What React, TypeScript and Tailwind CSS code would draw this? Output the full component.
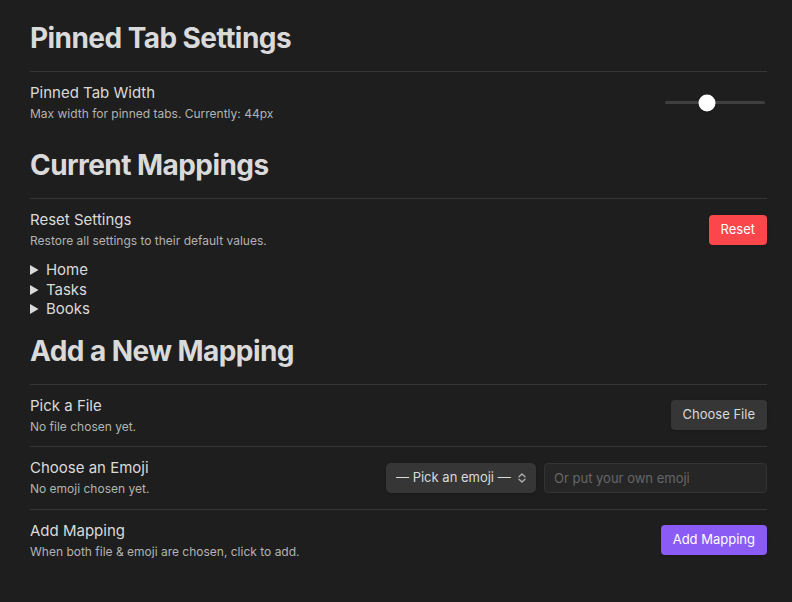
import { useState } from "react";

const Heading = ({ children, className = "" }: { children: React.ReactNode; className?: string }) => (
  <h2 className={`text-[28px] leading-[34px] font-bold tracking-[-0.02em] text-[#dadada] pb-4 ${className}`}>
    {children}
  </h2>
);

const Row = ({
  name,
  desc,
  children,
  className = "",
}: {
  name: string;
  desc: string;
  children?: React.ReactNode;
  className?: string;
}) => (
  <div className={`flex items-center justify-between gap-4 border-t border-[#363636] pt-[11px] ${className || "pb-[11.5px]"}`}>
    <div className="flex flex-col">
      <div className="text-[15px] leading-[20px] text-[#dadada]">{name}</div>
      <div className="pt-[3px] text-[12px] leading-[16px] text-[#b3b3b3]">{desc}</div>
    </div>
    <div className="flex items-center gap-2">{children}</div>
  </div>
);

const Slider = ({ value }: { value: number }) => (
  <div className="relative w-[100px] h-[18px] flex items-center mr-[2px]">
    <div className="w-full h-[3px] rounded-full bg-[#3f3f3f]" />
    <div
      className="absolute top-1/2 -translate-y-1/2 -translate-x-1/2 w-[17px] h-[17px] rounded-full bg-white shadow"
      style={{ left: `${value}%` }}
    />
  </div>
);

const ChevronsUpDown = () => (
  <svg width="8" height="10" viewBox="0 0 8 10" fill="none" stroke="#b3b3b3" strokeWidth="1.3" strokeLinecap="round" strokeLinejoin="round">
    <path d="M1 3.8 L4 1 L7 3.8" />
    <path d="M1 6.2 L4 9 L7 6.2" />
  </svg>
);

export default function App() {
  const [emoji, setEmoji] = useState("");
  const mappings = ["Home", "Tasks", "Books"];

  return (
    <div
      className="min-h-screen w-full bg-[#1e1e1e] pl-[30px] pr-[25px] pt-[21px] text-[#dadada]"
      style={{ fontFamily: "Inter, 'Noto Sans', sans-serif" }}
    >
      <Heading>Pinned Tab Settings</Heading>
      <Row name="Pinned Tab Width" desc="Max width for pinned tabs. Currently: 44px" className="pb-3">
        <Slider value={42} />
      </Row>

      <Heading className="mt-[14px]">Current Mappings</Heading>
      <Row name="Reset Settings" desc="Restore all settings to their default values." className="pb-[11px]">
        <button className="h-[30px] px-3 rounded-[4px] bg-[#fb464c] text-[13px] text-white shadow-sm">Reset</button>
      </Row>
      <div className="flex flex-col">
        {mappings.map((m) => (
          <details key={m} className="text-[15px] leading-[19.5px] text-[#dadada]">
            <summary className="cursor-pointer">{m}</summary>
          </details>
        ))}
      </div>

      <Heading className="mt-[15px]">Add a New Mapping</Heading>
      <Row name="Pick a File" desc="No file chosen yet.">
        <button className="h-[30px] px-3 rounded-[4px] bg-[#363636] text-[13px] text-[#dadada] shadow-sm">Choose File</button>
      </Row>
      <Row name="Choose an Emoji" desc="No emoji chosen yet.">
        <div className="relative">
          <select
            value={emoji}
            onChange={(e) => setEmoji(e.target.value)}
            className="appearance-none w-[150px] h-[30px] pl-[10px] pr-6 rounded-[5px] bg-[#363636] text-[13px] text-[#dadada] shadow-sm outline-none"
          >
            <option value="">— Pick an emoji —</option>
            <option value="🏠">🏠</option>
            <option value="✅">✅</option>
            <option value="📚">📚</option>
          </select>
          <span className="pointer-events-none absolute right-[10px] top-1/2 -translate-y-1/2 flex">
            <ChevronsUpDown />
          </span>
        </div>
        <input
          placeholder="Or put your own emoji"
          className="w-[223px] h-[30px] px-[9px] rounded-[4px] bg-[#262626] border border-[#333] text-[13px] text-[#dadada] placeholder:text-[#666] outline-none"
        />
      </Row>
      <Row name="Add Mapping" desc="When both file & emoji are chosen, click to add.">
        <button className="h-[30px] px-3 rounded-[4px] bg-[#8a5cf5] text-[13px] text-white shadow-sm">Add Mapping</button>
      </Row>
    </div>
  );
}
